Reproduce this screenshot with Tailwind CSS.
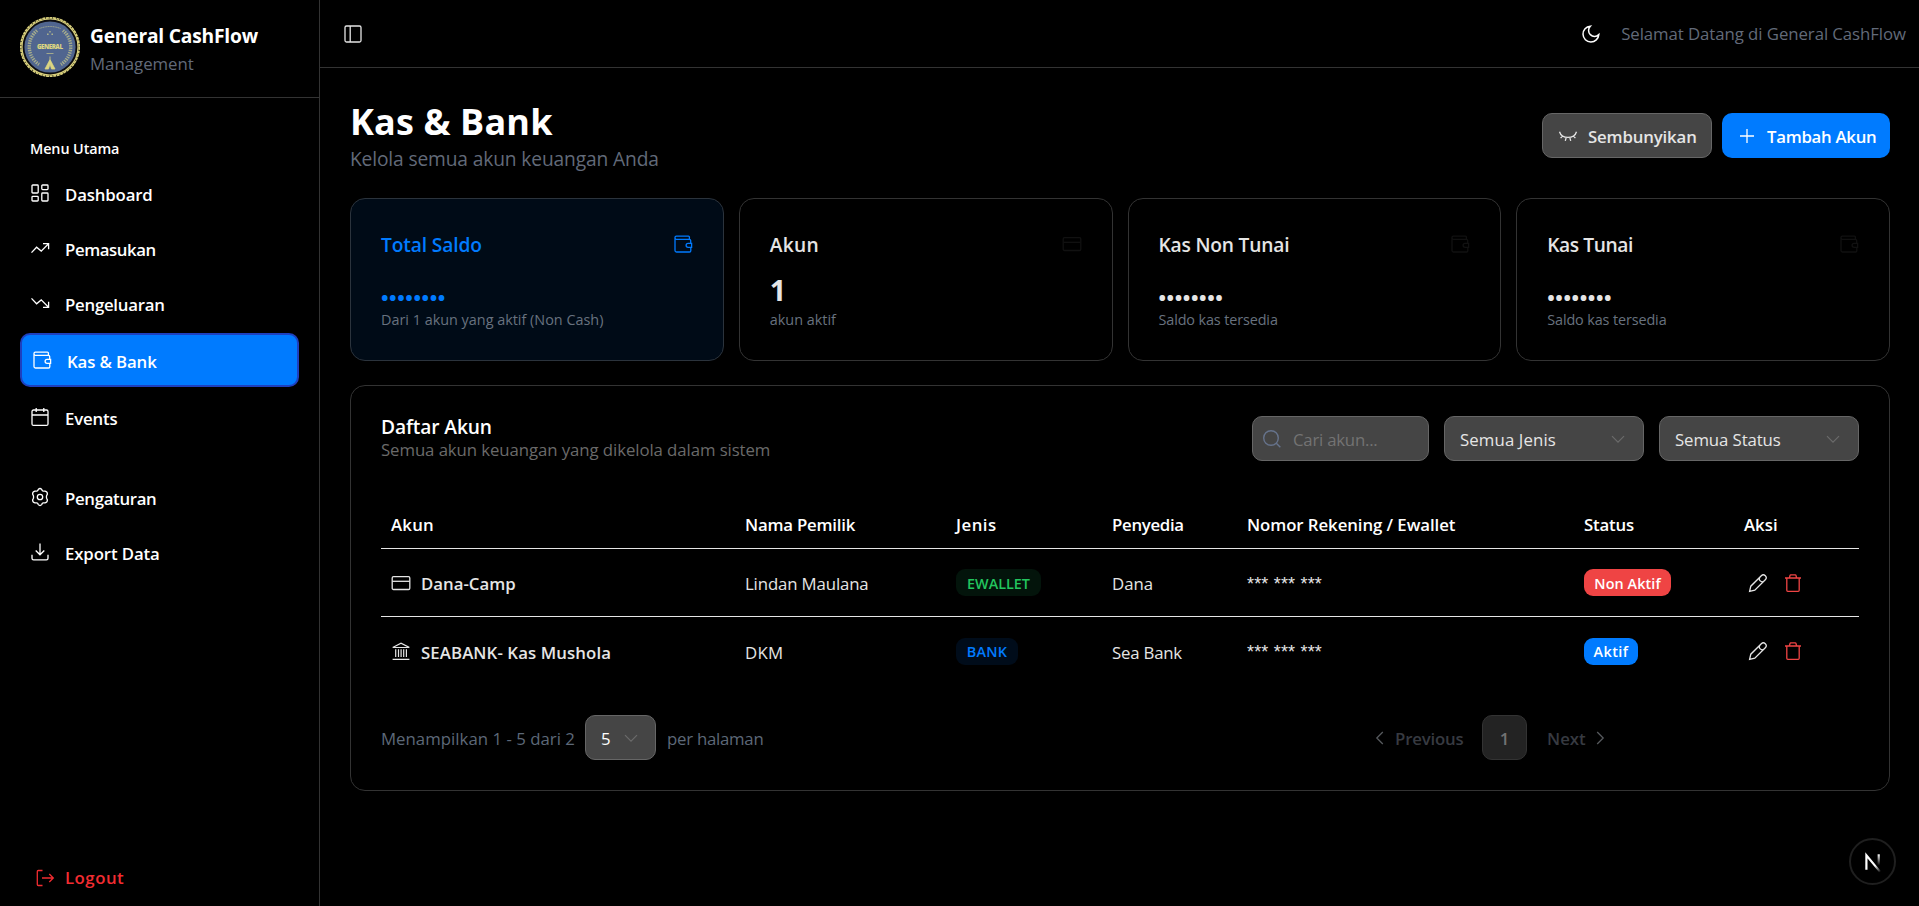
<!DOCTYPE html>
<html lang="id" class="text-[20px]">
<head>
<meta charset="utf-8">
<title>Kas &amp; Bank - General CashFlow</title>
<script src="https://cdn.jsdelivr.net/npm/@tailwindcss/browser@4"></script>
</head>
<body class="flex h-screen overflow-hidden bg-black font-['Open_Sans','Noto_Sans',sans-serif] text-[16.8px] leading-[25px] text-white">

<svg class="hidden">
  <symbol id="panel" viewBox="0 0 20 20"><rect x="2" y="2" width="16" height="16" rx="1.5"/><path d="M7.2 2v16"/></symbol>
  <symbol id="moon" viewBox="0 0 20 20"><path d="M9.3 2.2A7.9 7.9 0 1 0 17.8 10.6 5.9 5.9 0 0 1 9.3 2.2Z"/></symbol>
  <symbol id="grid" viewBox="0 0 20 20"><rect x="2" y="2" width="6.2" height="8" rx=".8"/><rect x="11.8" y="2" width="6.2" height="4.6" rx=".8"/><rect x="2" y="13.4" width="6.2" height="4.6" rx=".8"/><rect x="11.8" y="10" width="6.2" height="8" rx=".8"/></symbol>
  <symbol id="up" viewBox="0 0 20 20"><path d="M1.5 14.6 6.6 9.2l4.6 3.9L18.3 6M13 5.7h5.6v5.6"/></symbol>
  <symbol id="down" viewBox="0 0 20 20"><path d="M1.5 5.4l5.1 5.4 4.6-3.9L18.3 14M13 14.3h5.6V8.7"/></symbol>
  <symbol id="wallet" viewBox="0 0 20 20"><path d="M16.4 5.2V3.1a1 1 0 0 0-1-1H3.4a1.5 1.5 0 0 0-1.4 1.5v12.9a1.5 1.5 0 0 0 1.5 1.5h13a1.3 1.3 0 0 0 1.3-1.3v-3.4M17.7 9.3V6.5a1.3 1.3 0 0 0-1.3-1.2H3.6A1.5 1.5 0 0 1 2 3.8"/><path d="M18.6 9.3h-3.5a2 2 0 0 0 0 4h3.5Z"/></symbol>
  <symbol id="calendar" viewBox="0 0 20 20"><rect x="2" y="3" width="16" height="15.4" rx="1.5"/><path d="M2 8h16M6.2 1v4M13.8 1v4"/></symbol>
  <symbol id="gear" viewBox="0 0 20 20"><path d="M8.3 2.4Q10 .6 11.7 2.4L12.3 3.7Q12.7 4.3 13.6 4.2L15.1 4.1Q17.5 4.7 17.4 7.1L16.6 8.7Q16.2 10 16.6 11.3L17.4 12.9Q17.5 15.3 15.1 15.9L13.6 15.8Q12.7 15.7 12.3 16.3L11.7 17.6Q10 19.4 8.3 17.6L7.7 16.3Q7.3 15.7 6.4 15.8L4.9 15.9Q2.5 15.3 2.6 12.9L3.4 11.3Q3.8 10 3.4 8.7L2.6 7.1Q2.5 4.7 4.9 4.1L6.4 4.2Q7.3 4.3 7.7 3.7Z"/><circle cx="10" cy="10" r="2.7"/></symbol>
  <symbol id="download" viewBox="0 0 20 20"><path d="M10 1.5v11.3M5.7 8.5l4.3 4.3 4.3-4.3M2 12.8v3.4a1.6 1.6 0 0 0 1.6 1.6h12.8a1.6 1.6 0 0 0 1.6-1.6v-3.4"/></symbol>
  <symbol id="logout" viewBox="0 0 20 20"><path d="M7.5 2.5H3.3a1 1 0 0 0-1 1v13a1 1 0 0 0 1 1h4.2M7 10h11.3M14.300 6l4 4-4 4"/></symbol>
  <symbol id="eye" viewBox="0 0 20 20"><path d="M1.5 5.7c2.3 7.6 14.7 7.6 17 0M4.500 10.100l-1.900 2M8.100 11.800l-.8 3M11.900 11.800l.8 3M15.500 10.100l1.900 2"/></symbol>
  <symbol id="plus" viewBox="0 0 20 20"><path d="M10 3v14M3 10h14"/></symbol>
  <symbol id="card" viewBox="0 0 20 20"><rect x="1.2" y="3.7" width="17.6" height="12.8" rx="1.3"/><path d="M1.2 8.300h17.600"/></symbol>
  <symbol id="bank" viewBox="0 0 20 20"><path d="M2.2 6.2 10 2.2l7.8 4v.3H2.2ZM4.7 8.300v7.600M7.500 8.300v7.600M10.100 8.300v7.600M12.700 8.300v7.600M15.400 8.300v7.600M1.600 18.300h16.800"/></symbol>
  <symbol id="search" viewBox="0 0 20 20"><circle cx="9" cy="9" r="7.3"/><path d="m14.300 14.300 4 4"/></symbol>
  <symbol id="chev" viewBox="0 0 20 20"><path d="m4 7.200 6 6 6-6"/></symbol>
  <symbol id="pencil" viewBox="0 0 20 20"><path d="M1.600 18.400l1.200-5.200L13.300 2.700a2.700 2.700 0 0 1 4 4L6.800 17.200ZM11.800 4.300a2.900 2.900 0 0 0 4 4"/></symbol>
  <symbol id="trash" viewBox="0 0 20 20"><path d="M2 5h16M6.400 4.800 7 2.500a.8.8 0 0 1 .8-.6h4.400a.8.8 0 0 1 .8.6l.6 2.300M3.800 5v12.300a1 1 0 0 0 1 1h10.400a1 1 0 0 0 1-1V5"/></symbol>
</svg>

<aside class="flex w-[320px] shrink-0 flex-col border-r border-[#333]">
  <div class="flex h-[98px] shrink-0 items-start gap-2 border-b border-[#333] pt-[17px] pl-4">
    <svg class="size-[60px] shrink-0" viewBox="0 0 60 60">
      <circle cx="30" cy="30" r="29.2" fill="#0b0b0b" stroke="#d8cf7c" stroke-width="1.700" stroke-dasharray="3 .6"/>
      <circle cx="30" cy="30" r="28" fill="#0d0d10" stroke="#d8cf7c" stroke-width="1.200"/>
      <circle cx="30" cy="30" r="25.600" fill="#50658f"/>
      <g fill="none" stroke="#c3c58c">
        <path d="M17 13.500A21 21 0 0 0 19 47.500" stroke-width="3.400" stroke-dasharray="1.400 1" opacity=".75"/>
        <path d="M43 13.500A21 21 0 0 1 41 47.500" stroke-width="3.400" stroke-dasharray="1.400 1" opacity=".75"/>
        <path d="M19.500 11.500Q30 7.500 40.500 11.500" stroke-width="1" stroke-dasharray="1.200 .5" opacity=".7"/>
        <path d="M26.500 36.500h7" stroke-width=".9" opacity=".8"/>
      </g>
      <path d="M29.300 14h1.400v1.500h-1.400ZM27 16.500h1.600V18H27ZM31.400 16.500H33V18h-1.600Z" fill="#c3c58c" opacity=".8"/>
      <text x="30" y="32.200" text-anchor="middle" font-family="Open Sans" font-size="6.200" font-weight="800" textLength="26" fill="#dcd582">GENERAL</text>
      <path d="M30 39.500v3l5 9.500h-3.500L30 47l-1.500 5H25l5-9.500" fill="#dcd582" stroke="#dcd582" stroke-width=".8"/>
    </svg>
    <div class="mt-[4px]">
      <div class="text-[19.2px] leading-[30px] font-bold tracking-[-0.01em]">General CashFlow</div>
      <div class="text-[#626a79]">Management</div>
    </div>
  </div>
  <nav class="mt-[30px] flex flex-col gap-1 px-4 font-semibold [&_svg]:size-4 [&_svg]:shrink-0 [&_svg]:fill-none [&_svg]:stroke-current [&_svg]:stroke-[1.3]">
    <div class="-mb-1 flex h-[40px] items-center pl-[10px] text-[14.4px] tracking-[-0.007em]">Menu Utama</div>
    <a class="flex h-[50px] items-center gap-3 px-2"><svg><use href="#grid"/></svg><span class="pt-[2px] tracking-[-0.009em]">Dashboard</span></a>
    <a class="flex h-[50px] items-center gap-3 px-2"><svg><use href="#up"/></svg><span class="pt-[2px] tracking-[-0.025em]">Pemasukan</span></a>
    <a class="flex h-[50px] items-center gap-3 px-2"><svg><use href="#down"/></svg><span class="pt-[2px] tracking-[-0.015em]">Pengeluaran</span></a>
    <a class="flex h-[54px] items-center gap-3 rounded-[10px] border-2 border-[#1e40bf] bg-[#007bff] px-2"><svg><use href="#wallet"/></svg><span class="pt-[2px] tracking-[-0.007em]">Kas &amp; Bank</span></a>
    <a class="flex h-[50px] items-center gap-3 px-2"><svg><use href="#calendar"/></svg><span class="pt-[2px] tracking-[-0.009em]">Events</span></a>
    <a class="mt-5 flex h-[50px] items-center gap-3 px-2"><svg><use href="#gear"/></svg><span class="pt-[2px] tracking-[-0.019em]">Pengaturan</span></a>
    <a class="flex h-[50px] items-center gap-3 px-2"><svg><use href="#download"/></svg><span class="pt-[2px] tracking-[-0.007em]">Export Data</span></a>
  </nav>
  <a class="mt-auto mb-[16px] flex items-center gap-2 pl-[35px] font-semibold text-[#f22c31]"><svg class="size-4 fill-none stroke-current stroke-[1.3]"><use href="#logout"/></svg><span class="tracking-[0.03em]">Logout</span></a>
</aside>

<div class="flex min-w-0 flex-1 flex-col">
  <header class="flex h-[68px] shrink-0 items-center border-b border-[#333] pr-[13px] pl-[23px]">
    <svg class="size-4 fill-none stroke-[#e5e5e5] stroke-[1.3]"><use href="#panel"/></svg>
    <svg class="mr-[20px] ml-auto size-4 fill-none stroke-white stroke-[1.5]"><use href="#moon"/></svg>
    <span class="tracking-[-0.004em] text-[#626a79]">Selamat Datang di General CashFlow</span>
  </header>

  <main class="flex flex-col gap-[25px] pt-[30px] pr-[29px] pl-[30px]">
    <div class="flex h-[75px] items-center justify-between">
      <div>
        <h1 class="pt-[3px] text-[36px] leading-[42px] font-bold tracking-[0.004em]">Kas &amp; Bank</h1>
        <p class="pt-[2px] text-[19.2px] leading-[28px] tracking-[-0.007em] text-[#626a79]">Kelola semua akun keuangan Anda</p>
      </div>
      <div class="flex gap-2 font-semibold">
        <button class="flex h-[45px] w-[170px] items-center gap-[10px] rounded-[10px] border border-[#666] bg-[#454545] pl-[15px] text-[#e5e5e5]"><svg class="size-4 fill-none stroke-current stroke-[1.3]"><use href="#eye"/></svg><span class="pt-[2px] tracking-[-0.009em]">Sembunyikan</span></button>
        <button class="flex h-[45px] w-[168px] items-center gap-[10px] rounded-[10px] bg-[#007bff] pl-[15px] text-white"><svg class="size-4 fill-none stroke-current stroke-[1.3]"><use href="#plus"/></svg><span class="pt-[2px] tracking-[-0.016em]">Tambah Akun</span></button>
      </div>
    </div>

    <section class="grid h-[162px] grid-cols-4 gap-3 text-[#e5e5e5]">
      <div class="rounded-[15px] border border-[#2b333c] bg-[#000b17] p-[30px] text-[#007bff]">
        <div class="flex h-[30px] items-center justify-between"><span class="pt-px text-[19.2px] font-semibold tracking-[-0.007em]">Total Saldo</span><svg class="size-4 fill-none stroke-current stroke-[1.3]"><use href="#wallet"/></svg></div>
        <div class="mt-[10px] h-[40px] pt-[9px] text-[20px] leading-[40px] font-bold tracking-[0.03em]">••••••••</div>
        <div class="pt-px text-[14.4px] leading-[20px] text-[#68727f]">Dari 1 akun yang aktif (Non Cash)</div>
      </div>
      <div class="rounded-[15px] border border-[#333] p-[30px]">
        <div class="flex h-[30px] items-center justify-between"><span class="pt-px text-[19.2px] font-semibold tracking-[0.016em]">Akun</span><svg class="size-4 fill-none stroke-[#111] stroke-[1.3]"><use href="#card"/></svg></div>
        <div class="mt-[10px] h-[40px] pt-px text-[28.8px] leading-[40px] font-bold">1</div>
        <div class="pt-px text-[14.4px] leading-[20px] text-[#68727f]">akun aktif</div>
      </div>
      <div class="rounded-[15px] border border-[#333] p-[30px]">
        <div class="flex h-[30px] items-center justify-between"><span class="pt-px text-[19.2px] font-semibold tracking-[-0.01em]">Kas Non Tunai</span><svg class="size-4 fill-none stroke-[#111] stroke-[1.3]"><use href="#wallet"/></svg></div>
        <div class="mt-[10px] h-[40px] pt-[9px] text-[20px] leading-[40px] font-bold tracking-[0.03em]">••••••••</div>
        <div class="pt-px text-[14.4px] leading-[20px] tracking-[-0.008em] text-[#68727f]">Saldo kas tersedia</div>
      </div>
      <div class="rounded-[15px] border border-[#333] p-[30px]">
        <div class="flex h-[30px] items-center justify-between"><span class="pt-px text-[19.2px] font-semibold tracking-[-0.022em]">Kas Tunai</span><svg class="size-4 fill-none stroke-[#111] stroke-[1.3]"><use href="#wallet"/></svg></div>
        <div class="mt-[10px] h-[40px] pt-[9px] text-[20px] leading-[40px] font-bold tracking-[0.03em]">••••••••</div>
        <div class="pt-px text-[14.4px] leading-[20px] tracking-[-0.008em] text-[#68727f]">Saldo kas tersedia</div>
      </div>
    </section>

    <section class="rounded-[15px] border border-[#333] p-[30px]">
      <div class="flex h-[45px] items-start">
        <div class="mr-auto">
          <h2 class="text-[19.2px] leading-[21px] font-semibold tracking-[-0.006em]">Daftar Akun</h2>
          <p class="tracking-[-0.005em] text-[#6a6a6a]">Semua akun keuangan yang dikelola dalam sistem</p>
        </div>
        <div class="flex gap-3 text-[#e5e5e5]">
          <div class="flex h-[45px] w-[177px] items-center gap-[11px] rounded-[10px] border border-[#666] bg-[#454545] pl-[9px] text-[#737373]"><svg class="size-4 fill-none stroke-[#66738c] stroke-[1.4]"><use href="#search"/></svg><span class="pt-[1px] tracking-[-0.014em]">Cari akun...</span></div>
          <div class="flex h-[45px] w-[200px] items-center justify-between rounded-[10px] border border-[#666] bg-[#454545] pr-[15px] pl-[15px]"><span class="pt-[1px] tracking-[0.007em]">Semua Jenis</span><svg class="size-4 fill-none stroke-[#6b6b6b] stroke-[1.2]"><use href="#chev"/></svg></div>
          <div class="flex h-[45px] w-[200px] items-center justify-between rounded-[10px] border border-[#666] bg-[#454545] pr-[15px] pl-[15px]"><span class="pt-[1px] tracking-[-0.006em]">Semua Status</span><svg class="size-4 fill-none stroke-[#6b6b6b] stroke-[1.2]"><use href="#chev"/></svg></div>
        </div>
      </div>

      <div class="mt-[38px] text-[#e5e5e5]">
        <div class="grid h-[50px] grid-cols-[354px_211px_156px_135px_337px_160px_1fr] items-center border-b border-[#e5e5e5] pt-px pl-[10px] font-semibold text-white">
          <span class="tracking-[0.014em]">Akun</span><span class="tracking-[-0.012em]">Nama Pemilik</span><span class="tracking-[0.03em]">Jenis</span><span class="tracking-[-0.018em]">Penyedia</span><span class="tracking-[-0.004em]">Nomor Rekening / Ewallet</span><span class="tracking-[-0.01em]">Status</span><span>Aksi</span>
        </div>
        <div class="grid h-[68px] grid-cols-[354px_211px_156px_135px_337px_160px_1fr] items-center border-b border-[#e5e5e5] pl-[10px]">
          <div class="flex items-center gap-2"><svg class="size-4 fill-none stroke-current stroke-[1.3]"><use href="#card"/></svg><span class="pt-[2px] font-semibold">Dana-Camp</span></div>
          <span class="pt-[2px] tracking-[-0.008em]">Lindan Maulana</span>
          <span class="flex h-[27px] w-[85px] items-center justify-center rounded-[9px] bg-[#03140b] pt-px text-[14.4px] font-semibold text-[#22c55e]">EWALLET</span>
          <span class="pt-[2px]">Dana</span>
          <span class="pt-[3px] font-['Liberation_Sans'] text-[18px] tracking-[0.01em]">*** *** ***</span>
          <span class="flex h-[27px] w-[87px] items-center justify-center rounded-[9px] bg-[#ef4444] pt-px text-[14.4px] font-semibold tracking-[0.006em] text-white">Non Aktif</span>
          <div class="flex gap-[15px] pl-[4px]"><svg class="size-4 fill-none stroke-current stroke-[1.3]"><use href="#pencil"/></svg><svg class="size-4 fill-none stroke-[#ef4444] stroke-[1.3]"><use href="#trash"/></svg></div>
        </div>
        <div class="grid h-[68px] grid-cols-[354px_211px_156px_135px_337px_160px_1fr] items-center pl-[10px]">
          <div class="flex items-center gap-2"><svg class="size-4 fill-none stroke-current stroke-[1.2]"><use href="#bank"/></svg><span class="pt-[2px] font-semibold tracking-[0.006em]">SEABANK- Kas Mushola</span></div>
          <span class="pt-[2px] tracking-[0.02em]">DKM</span>
          <span class="flex h-[27px] w-[62px] items-center justify-center rounded-[9px] bg-[#000c1a] pt-px text-[14.4px] font-semibold tracking-[0.02em] text-[#007bff]">BANK</span>
          <span class="pt-[2px] tracking-[-0.012em]">Sea Bank</span>
          <span class="pt-[3px] font-['Liberation_Sans'] text-[18px] tracking-[0.01em]">*** *** ***</span>
          <span class="flex h-[27px] w-[54px] items-center justify-center rounded-[9px] bg-[#007bff] pt-px text-[14.4px] font-semibold tracking-[0.03em] text-white">Aktif</span>
          <div class="flex gap-[15px] pl-[4px]"><svg class="size-4 fill-none stroke-current stroke-[1.3]"><use href="#pencil"/></svg><svg class="size-4 fill-none stroke-[#ef4444] stroke-[1.3]"><use href="#trash"/></svg></div>
        </div>
      </div>

      <div class="mt-[30px] flex h-[45px] items-center text-[#5d6878]">
        <span class="w-[204px] pt-[2px] tracking-[0.001em]">Menampilkan 1 - 5 dari 2</span>
        <div class="flex h-[45px] w-[71px] items-center gap-[10px] rounded-[10px] border border-[#666] bg-[#454545] pl-[15px] text-white"><span class="w-[10px] pt-[2px]">5</span><svg class="size-4 fill-none stroke-[#6b6b6b] stroke-[1.2]"><use href="#chev"/></svg></div>
        <span class="pt-[2px] pl-[11px] tracking-[-0.015em]">per halaman</span>
        <div class="mr-[249px] ml-auto flex items-center font-semibold text-[#373a41]">
          <svg class="size-4 rotate-90 fill-none stroke-[#55585c] stroke-[1.3]"><use href="#chev"/></svg>
          <span class="w-[92px] pt-[2px] pl-[5px] tracking-[-0.01em]">Previous</span>
          <span class="flex h-[45px] w-[45px] items-center justify-center rounded-[10px] border border-[#333] bg-[#232323] pt-[2px] text-[#727272]">1</span>
          <span class="w-[63px] pt-[2px] pl-[20px]">Next</span>
          <svg class="size-4 -rotate-90 fill-none stroke-[#55585c] stroke-[1.3]"><use href="#chev"/></svg>
        </div>
      </div>
    </section>
  </main>
</div>

<div class="fixed right-[23px] bottom-[21px] flex size-[47px] items-center justify-center rounded-full border-2 border-[#1f1f1f] bg-black">
  <svg class="size-[22px]" viewBox="0 0 20 20" fill="none" stroke-width="2">
    <defs><linearGradient id="na" gradientUnits="userSpaceOnUse" x1="12" y1="13" x2="17" y2="19"><stop stop-color="#fff"/><stop offset="1" stop-color="#fff" stop-opacity="0"/></linearGradient><linearGradient id="nb" x1="0" y1="0" x2="0" y2="1"><stop stop-color="#fff"/><stop offset="1" stop-color="#fff" stop-opacity="0"/></linearGradient></defs>
    <path d="M4 17V4L16.500 19" stroke="url(#na)"/>
    <rect x="14.200" y="3" width="2" height="10" fill="url(#nb)"/>
  </svg>
</div>
</body>
</html>
